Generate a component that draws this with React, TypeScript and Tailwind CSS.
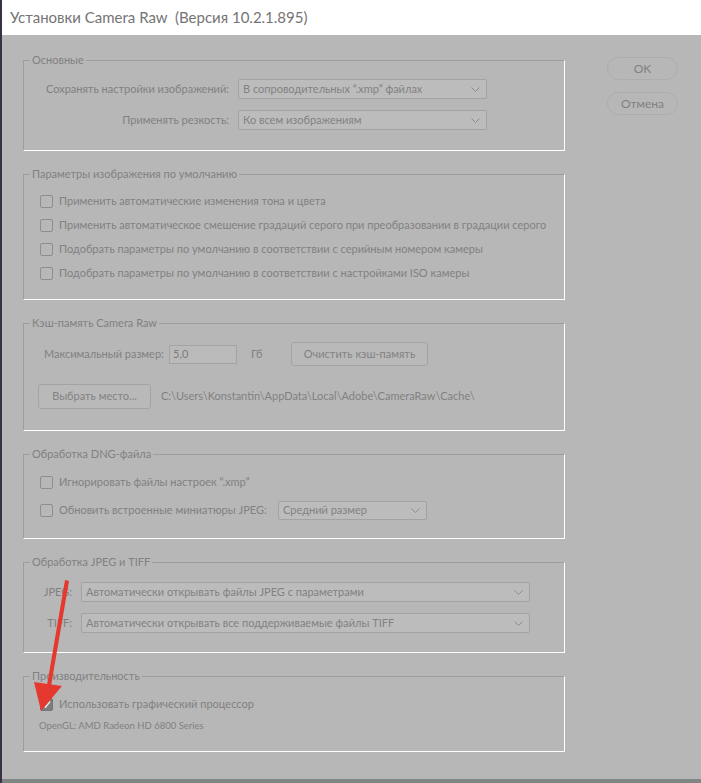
import type { ReactNode } from "react";

const Chevron = () => (
  <svg width="9" height="5" viewBox="0 0 9 5" className="shrink-0">
    <path d="M0.5 0.5 L4.5 4.5 L8.5 0.5" fill="none" stroke="#8c8c8c" strokeWidth="1" />
  </svg>
);

const Select = ({ text, className }: { text: string; className: string }) => (
  <div
    className={`flex items-center justify-between rounded-[2px] border border-[#a3a3a3] bg-[#bcbcbc] pl-[4px] pr-[6px] text-[#828282] ${className}`}
  >
    <span className="truncate">{text}</span>
    <Chevron />
  </div>
);

const Checkbox = ({ checked = false }: { checked?: boolean }) =>
  checked ? (
    <div className="flex h-[13px] w-[13px] shrink-0 items-center justify-center rounded-[2px] border border-[#777] bg-[#7c7c7c]">
      <svg width="11" height="11" viewBox="0 0 11 11">
        <path d="M2 5.5 L4.5 8 L9 2.5" fill="none" stroke="#e6e6e6" strokeWidth="1.6" />
      </svg>
    </div>
  ) : (
    <div className="h-[13px] w-[13px] shrink-0 rounded-[2px] border border-[#8e8e8e]" />
  );

const CheckRow = ({ label, checked }: { label: string; checked?: boolean }) => (
  <div className="flex h-[24px] items-center">
    <Checkbox checked={checked} />
    <span className="ml-[6px]">{label}</span>
  </div>
);

const Group = ({ title, className, children }: { title: string; className: string; children: ReactNode }) => (
  <div
    className={`relative border border-t-[#9d9d9d] border-l-[#9d9d9d] border-b-white border-r-white ${className}`}
  >
    <span className="absolute -top-[8px] left-[6px] bg-[#b7b7b7] px-[2px] leading-[14px]">{title}</span>
    {children}
  </div>
);

const Button = ({ label, className }: { label: string; className: string }) => (
  <div
    className={`flex items-center justify-center rounded-[3px] border border-[#a3a3a3] bg-[#b9b9b9] text-[#828282] ${className}`}
  >
    {label}
  </div>
);

export default function App() {
  return (
    <div className="relative flex h-[783px] w-[701px] overflow-hidden whitespace-nowrap bg-[#3a3145] font-['Lato','Liberation_Sans',sans-serif] text-[11px] text-[#818181]">
      <div className="ml-[2px] flex w-[699px] flex-col">
        {/* title bar */}
        <div className="flex h-[35px] shrink-0 items-center bg-white pl-[8px] text-[15px] text-[#747474]">
          Установки Camera Raw&nbsp; (Версия 10.2.1.895)
        </div>

        <div className="flex h-[744px] shrink-0 bg-[#b7b7b7] pl-[21px] pt-[22px]">
          <div className="flex w-[542px] flex-col gap-[23px] pt-[3px]">
            <Group title="Основные" className="h-[91px] pt-[18px]">
              <div className="flex flex-col gap-[11px]">
                <div className="flex items-center">
                  <span className="w-[205px] text-right">Сохранять настройки изображений:</span>
                  <Select text={"В сопроводительных \u201C.xmp\u201D файлах"} className="ml-[9px] h-[20px] w-[249px]" />
                </div>
                <div className="flex items-center">
                  <span className="w-[205px] text-right">Применять резкость:</span>
                  <Select text="Ко всем изображениям" className="ml-[9px] h-[20px] w-[249px]" />
                </div>
              </div>
            </Group>

            <Group title="Параметры изображения по умолчанию" className="h-[126px] pl-[16px] pt-[14px]">
              <CheckRow label="Применить автоматические изменения тона и цвета" />
              <CheckRow label="Применить автоматическое смешение градаций серого при преобразовании в градации серого" />
              <CheckRow label="Подобрать параметры по умолчанию в соответствии с серийным номером камеры" />
              <CheckRow label="Подобрать параметры по умолчанию в соответствии с настройками ISO камеры" />
            </Group>

            <Group title="Кэш-память Camera Raw" className="h-[108px] pt-[18px]">
              <div className="flex h-[24px] items-center pl-[20px]">
                <span className="w-[125px]">Максимальный размер:</span>
                <div className="flex h-[19px] w-[68px] items-center border border-[#a3a3a3] bg-[#bababa] pl-[3px] text-[#7a7a7a]">
                  5,0
                </div>
                <span className="w-[54px] pl-[14px]">Гб</span>
                <Button label="Очистить кэш-память" className="h-[24px] w-[137px]" />
              </div>
              <div className="mt-[18px] flex items-center pl-[14px]">
                <Button label="Выбрать место..." className="h-[25px] w-[113px]" />
                <span className="ml-[10px]">C:\Users\Konstantin\AppData\Local\Adobe\CameraRaw\Cache\</span>
              </div>
            </Group>

            <Group title="Обработка DNG-файла" className="h-[85px] pl-[16px] pt-[15px]">
              <CheckRow label={"Игнорировать файлы настроек \u201C.xmp\u201D"} />
              <div className="mt-[4px] flex h-[24px] items-center">
                <Checkbox />
                <span className="ml-[6px] w-[219px]">Обновить встроенные миниатюры JPEG:</span>
                <Select text="Средний размер" className="h-[19px] w-[149px]" />
              </div>
            </Group>

            <Group title="Обработка JPEG и TIFF" className="h-[91px] pt-[19px]">
              <div className="flex flex-col gap-[11px]">
                <div className="flex items-center">
                  <span className="w-[48px] text-right">JPEG:</span>
                  <Select
                    text="Автоматически открывать файлы JPEG с параметрами"
                    className="ml-[9px] h-[20px] w-[449px]"
                  />
                </div>
                <div className="flex items-center">
                  <span className="w-[48px] text-right">TIFF:</span>
                  <Select
                    text="Автоматически открывать все поддерживаемые файлы TIFF"
                    className="ml-[9px] h-[20px] w-[449px]"
                  />
                </div>
              </div>
            </Group>

            <Group title="Производительность" className="h-[76px] pl-[16px] pt-[15px]">
              <CheckRow label="Использовать графический процессор" checked />
              <div className="-ml-[1px] mt-[4px] text-[9.5px] leading-[12px]">OpenGL: AMD Radeon HD 6800 Series</div>
            </Group>
          </div>

          <div className="ml-[42px] flex flex-col gap-[12px]">
            <div className="flex h-[23px] w-[71px] items-center justify-center rounded-full border border-[#adadad] text-[12px] text-[#818181]">
              OK
            </div>
            <div className="flex h-[23px] w-[71px] items-center justify-center rounded-full border border-[#adadad] text-[12px] text-[#818181]">
              Отмена
            </div>
          </div>
        </div>

        <div className="h-[4px] shrink-0 bg-[#7f8684]" />
      </div>

      {/* red annotation arrow */}
      <svg className="pointer-events-none absolute inset-0" width="701" height="783" viewBox="0 0 701 783">
        <path d="M65 580 L69 581 L51 686 L47 685 Z" fill="#e5392f" />
        <path d="M34 682 L62 686 L41 711 Z" fill="#e5392f" />
      </svg>
    </div>
  );
}
